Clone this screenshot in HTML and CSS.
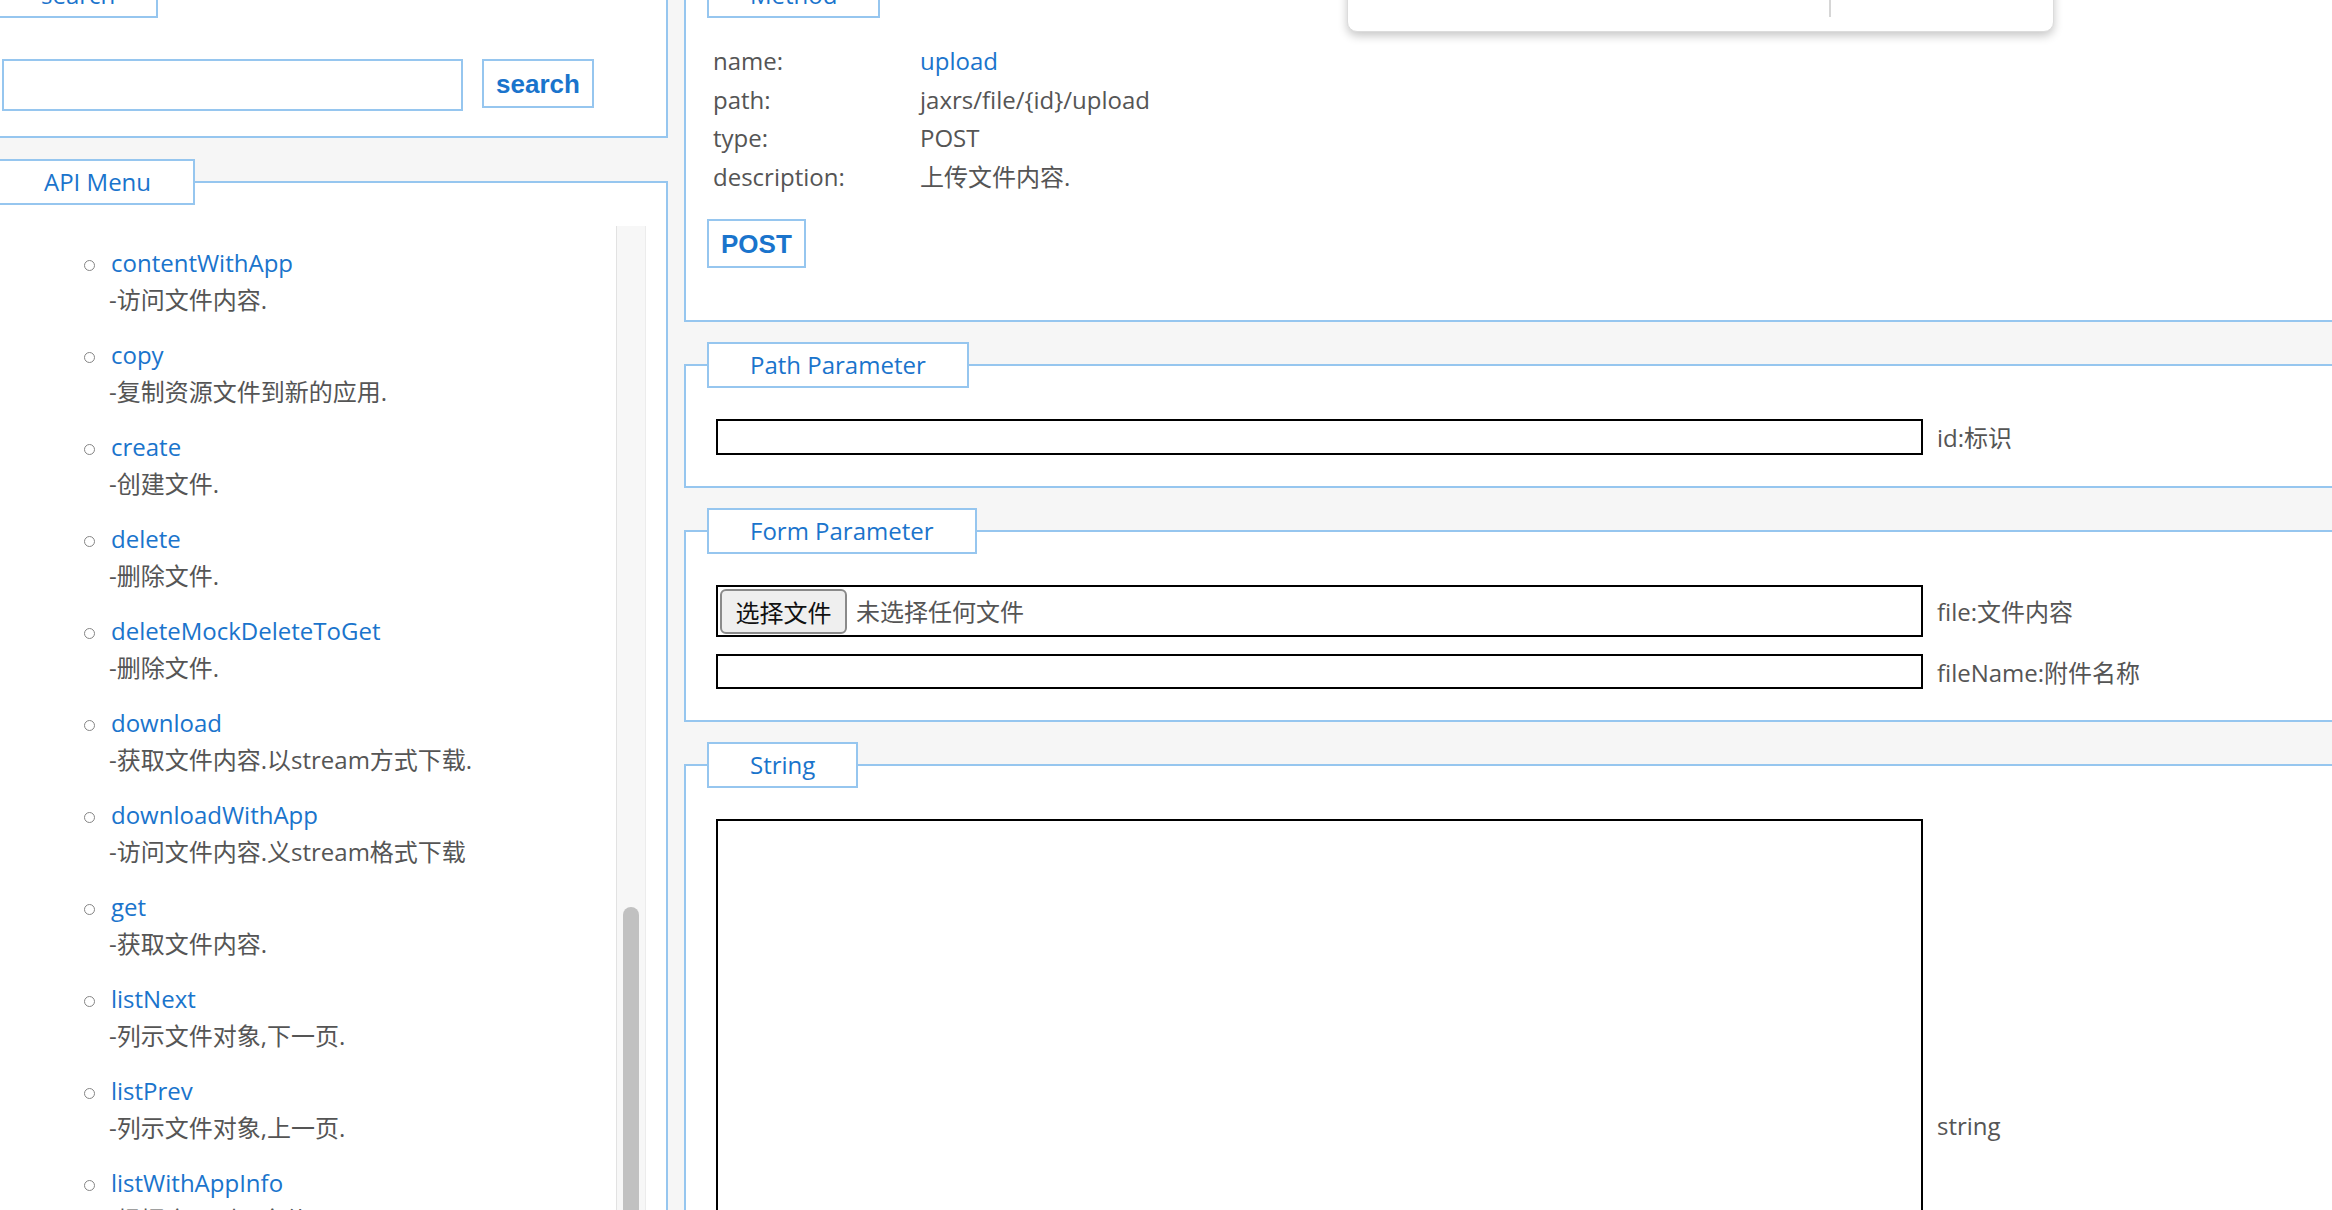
FILE: index.html
```html
<!DOCTYPE html>
<html lang="zh-CN">
<head>
<meta charset="utf-8">
<title>API Explorer</title>
<link rel="stylesheet" href="styles.css">
</head>
<body>
<div class="page">
  <aside class="side">
    <fieldset class="box search-box">
      <legend class="legend">search</legend>
      <div class="search-row">
        <input class="search-input" type="text">
        <button class="btn" type="button">search</button>
      </div>
    </fieldset>
    <fieldset class="box menu-box">
      <legend class="legend">API Menu</legend>
      <div class="menu-scroll">
        <ul class="menu-list">
          <li><a class="item-title">contentWithApp</a><div class="desc">-访问文件内容.</div></li>
          <li><a class="item-title">copy</a><div class="desc">-复制资源文件到新的应用.</div></li>
          <li><a class="item-title">create</a><div class="desc">-创建文件.</div></li>
          <li><a class="item-title">delete</a><div class="desc">-删除文件.</div></li>
          <li><a class="item-title">deleteMockDeleteToGet</a><div class="desc">-删除文件.</div></li>
          <li><a class="item-title">download</a><div class="desc">-获取文件内容.以stream方式下载.</div></li>
          <li><a class="item-title">downloadWithApp</a><div class="desc">-访问文件内容.义stream格式下载</div></li>
          <li><a class="item-title">get</a><div class="desc">-获取文件内容.</div></li>
          <li><a class="item-title">listNext</a><div class="desc">-列示文件对象,下一页.</div></li>
          <li><a class="item-title">listPrev</a><div class="desc">-列示文件对象,上一页.</div></li>
          <li><a class="item-title">listWithAppInfo</a><div class="desc">-根据应用列示文件.</div></li>
        </ul>
        <div class="track"><div class="thumb"></div></div>
      </div>
    </fieldset>
  </aside>

  <main class="content">
    <fieldset class="box method-box">
      <legend class="legend">Method</legend>
      <table class="info">
        <tr><td class="info-key">name:</td><td class="info-val link">upload</td></tr>
        <tr><td class="info-key">path:</td><td class="info-val">jaxrs/file/{id}/upload</td></tr>
        <tr><td class="info-key">type:</td><td class="info-val">POST</td></tr>
        <tr><td class="info-key">description:</td><td class="info-val">上传文件内容.</td></tr>
      </table>
      <button class="btn post-btn" type="button">POST</button>
    </fieldset>

    <fieldset class="box param-box">
      <legend class="legend">Path Parameter</legend>
      <div class="param-row">
        <input class="field" type="text">
        <span class="plabel">id:标识</span>
      </div>
    </fieldset>

    <fieldset class="box param-box">
      <legend class="legend">Form Parameter</legend>
      <div class="param-row">
        <div class="file-field">
          <span class="file-btn">选择文件</span>
          <span class="file-name">未选择任何文件</span>
        </div>
        <span class="plabel">file:文件内容</span>
      </div>
      <div class="param-row">
        <input class="field field-short" type="text">
        <span class="plabel">fileName:附件名称</span>
      </div>
    </fieldset>

    <fieldset class="box param-box string-box">
      <legend class="legend">String</legend>
      <div class="param-row">
        <textarea class="area"></textarea>
        <span class="plabel">string</span>
      </div>
    </fieldset>
  </main>
</div>

<div class="popup"><span class="popup-divider"></span></div>
</body>
</html>
```

FILE: styles.css
```css
* { box-sizing: border-box; }

html, body {
  margin: 0;
  padding: 0;
}

body {
  position: relative;
  width: 2332px;
  height: 1210px;
  overflow: hidden;
  background: #f6f6f6;
  font-family: "Open Sans", "Noto Sans CJK SC", sans-serif;
  font-size: 24px;
  color: #555;
}

.page {
  display: flex;
  align-items: flex-start;
  gap: 16px;
  margin-top: -28px;
  margin-left: -24px;
}

.side {
  flex: none;
  width: 692px;
}

.content {
  flex: none;
  width: 1720px;
}

.box {
  margin: 0;
  min-width: 0;
  border: 2px solid #96c6ef;
  background: #fff;
  padding: 0 20px 0 20px;
}

.legend {
  margin: 0;
  border: 2px solid #96c6ef;
  background: #fff;
  color: #1a74cc;
  padding: 0 41px;
  font-size: 24px;
  line-height: 42px;
}

.menu-box .legend {
  padding: 0 42px 0 44px;
}

/* search */
.search-box {
  padding-top: 41px;
  padding-bottom: 25px;
}

.search-row {
  display: flex;
  align-items: flex-start;
  gap: 19px;
  margin-left: 4px;
}

.search-input {
  width: 461px;
  height: 52px;
  border: 2px solid #96c6ef;
  background: #fff;
  outline: none;
}

.btn {
  border: 2px solid #96c6ef;
  background: #fff;
  color: #1a74cc;
  font-family: "Liberation Sans", Arial, sans-serif;
  font-weight: bold;
  font-size: 26px;
  line-height: 30px;
  padding: 8px 12px 7px;
  margin: 0;
}

/* menu */
.menu-box {
  margin-top: 21px;
  padding-top: 21px;
  padding-bottom: 0;
}

.menu-scroll {
  display: flex;
  height: 1100px;
}

.menu-list {
  flex: 1;
  margin: 0;
  padding: 18px 0 0 111px;
  list-style: none;
}

.menu-list li {
  line-height: 37px;
  margin-bottom: 18px;
}

.item-title {
  display: block;
  color: #1a74cc;
  text-decoration: none;
}

.item-title::before {
  content: "";
  display: inline-block;
  width: 9px;
  height: 9px;
  border: 1.5px solid #858585;
  border-radius: 50%;
  margin-left: -25px;
  margin-right: 16px;
  vertical-align: middle;
}

.desc {
  color: #555;
}

.track {
  flex: none;
  width: 30px;
  background: #f7f7f7;
  border-left: 1px solid #e2e2e2;
  border-right: 1px solid #ececec;
}

.thumb {
  width: 16px;
  height: 420px;
  margin-top: 681px;
  margin-left: 6px;
  border-radius: 8px;
  background: #c1c1c1;
}

/* method */
.method-box {
  padding-top: 24px;
  padding-bottom: 52px;
  padding-left: 21px;
}

.info {
  border-collapse: collapse;
  margin-left: 6px;
  line-height: 38.7px;
}

.info td {
  padding: 0;
}

.info-key {
  width: 207px;
}

.info-val.link {
  color: #1a74cc;
}

.post-btn {
  margin-top: 22px;
  display: block;
}

/* parameters */
.param-box {
  margin-top: 20px;
  padding-top: 31px;
  padding-bottom: 31px;
  padding-left: 21px;
}

.param-row {
  display: flex;
  align-items: center;
  gap: 14px;
  margin-left: 9px;
}

.param-row + .param-row {
  margin-top: 17px;
}

.field {
  width: 1207px;
  height: 36px;
  border: 2px solid #000;
  background: #fff;
  outline: none;
  margin: 0;
}

.field-short {
  height: 35px;
}

.plabel {
  color: #555;
  white-space: nowrap;
}

.file-field {
  display: flex;
  align-items: center;
  width: 1207px;
  height: 52px;
  border: 2px solid #000;
  background: #fff;
  padding: 0 2px;
}

.file-btn {
  display: flex;
  align-items: center;
  justify-content: center;
  width: 127px;
  height: 45px;
  margin-top: 1px;
  border: 2px solid #8a8a8a;
  border-radius: 6px;
  background: #efefef;
  color: #111;
  font-family: "Noto Sans CJK SC", sans-serif;
  font-size: 24px;
}

.file-name {
  margin-left: 9px;
  color: #555;
  font-family: "Noto Sans CJK SC", sans-serif;
}

.string-box {
  margin-top: 20px;
}

.area {
  display: block;
  width: 1207px;
  height: 614px;
  border: 2px solid #000;
  background: #fff;
  resize: none;
  margin: 0;
  outline: none;
}

/* floating popup at top */
.popup {
  position: absolute;
  top: -30px;
  left: 1347px;
  width: 707px;
  height: 62px;
  display: flex;
  align-items: flex-start;
  background: #fff;
  border: 1px solid #dcdcdc;
  border-radius: 0 0 10px 10px;
  box-shadow: 0 4px 10px rgba(0, 0, 0, 0.22);
}

.popup-divider {
  margin-left: 481px;
  width: 2px;
  height: 46px;
  background: #d6d6d6;
}
```
